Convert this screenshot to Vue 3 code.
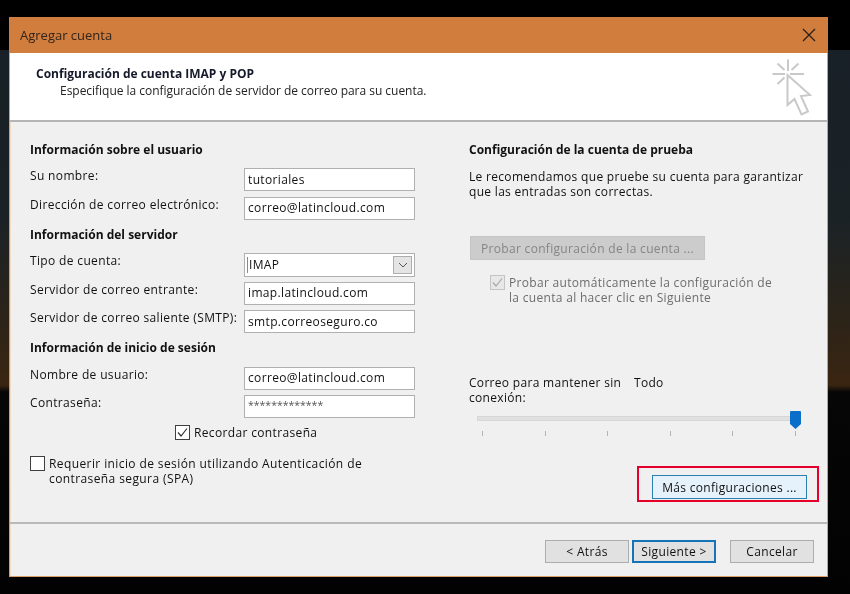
<script setup>
const userRows = [
  { label: 'Su nombre:', value: 'tutoriales' },
  { label: 'Dirección de correo electrónico:', value: 'correo@latincloud.com' },
]
const serverRows = [
  { label: 'Servidor de correo entrante:', value: 'imap.latincloud.com' },
  { label: 'Servidor de correo saliente (SMTP):', value: 'smtp.correoseguro.co' },
]
const loginRows = [
  { label: 'Nombre de usuario:', value: 'correo@latincloud.com' },
  { label: 'Contraseña:', value: '*************', pass: true },
]
const ticks = [0, 1, 2, 3, 4, 5]
</script>

<template>
  <div class="page">
    <div class="window">
      <div class="titlebar">
        <span class="title">Agregar cuenta</span>
        <svg class="close" width="14" height="14" viewBox="0 0 14 14">
          <path d="M1 1 L13 13 M13 1 L1 13" stroke="#2a2018" stroke-width="1.3" fill="none" />
        </svg>
      </div>

      <header class="head">
        <div class="head-text">
          <div class="head-title">Configuración de cuenta IMAP y POP</div>
          <div class="head-sub">Especifique la configuración de servidor de correo para su cuenta.</div>
        </div>
        <svg class="wizard" width="40" height="58" viewBox="772 58 40 58">
          <g stroke="#c9c9c9" stroke-width="2" fill="none">
            <path d="M788 59.5 V71 M772.5 74 H785 M790 74 H804 M777.5 63.5 L784.5 70 M798.5 63.5 L791.5 70 M777.5 84 L784.5 77.5" />
            <path d="M787.5 75 V105 L794.5 99 L801.5 114.5 L808 111.5 L801 96 L810 95 Z" fill="#fff" stroke-linejoin="miter" />
          </g>
        </svg>
      </header>

      <main class="body">
        <section class="left">
          <h3 class="section first">Información sobre el usuario</h3>
          <div v-for="r in userRows" :key="r.label" class="row">
            <label>{{ r.label }}</label>
            <div class="input">{{ r.value }}</div>
          </div>

          <h3 class="section">Información del servidor</h3>
          <div class="row">
            <label>Tipo de cuenta:</label>
            <div class="input select">
              <span class="caret-line"></span>
              <span>IMAP</span>
              <span class="arrow">
                <svg width="10" height="6" viewBox="0 0 10 6"><path d="M1 1 L5 5 L9 1" stroke="#555" stroke-width="1" fill="none" /></svg>
              </span>
            </div>
          </div>
          <div v-for="r in serverRows" :key="r.label" class="row">
            <label>{{ r.label }}</label>
            <div class="input">{{ r.value }}</div>
          </div>

          <h3 class="section">Información de inicio de sesión</h3>
          <div v-for="r in loginRows" :key="r.label" class="row">
            <label>{{ r.label }}</label>
            <div class="input" :class="{ pass: r.pass }">{{ r.value }}</div>
          </div>

          <div class="remember">
            <span class="check">
              <svg width="13" height="13" viewBox="0 0 13 13"><path d="M2 6.5 L5 10 L11 2.5" stroke="#333" stroke-width="1.2" fill="none" /></svg>
            </span>
            <span>Recordar contraseña</span>
          </div>

          <div class="spa">
            <span class="check"></span>
            <span>Requerir inicio de sesión utilizando Autenticación de<br />contraseña segura (SPA)</span>
          </div>
        </section>

        <section class="right">
          <h3 class="section first">Configuración de la cuenta de prueba</h3>
          <p class="intro">Le recomendamos que pruebe su cuenta para garantizar<br />que las entradas son correctas.</p>
          <div class="test-btn">Probar configuración de la cuenta ...</div>
          <div class="auto">
            <span class="check off">
              <svg width="13" height="13" viewBox="0 0 13 13"><path d="M2 6.5 L5 10 L11 2.5" stroke="#a8a8a8" stroke-width="1.2" fill="none" /></svg>
            </span>
            <span>Probar automáticamente la configuración de<br />la cuenta al hacer clic en Siguiente</span>
          </div>

          <div class="offline">
            <span class="offline-label">Correo para mantener sin conexión:</span>
            <span>Todo</span>
          </div>
          <div class="slider">
            <div class="track"></div>
            <svg class="thumb" width="11" height="18" viewBox="0 0 11 18"><path d="M1 0 H10 Q11 0 11 1 V13 L5.5 18 L0 13 V1 Q0 0 1 0 Z" fill="#0a6fc9" /></svg>
            <div class="ticks">
              <span v-for="t in ticks" :key="t" class="tick"></span>
            </div>
          </div>

          <div class="more-wrap">
            <div class="more-btn">Más configuraciones ...</div>
            <div class="highlight"></div>
          </div>
        </section>
      </main>

      <footer class="foot">
        <div class="btn">&lt; Atrás</div>
        <div class="btn primary">Siguiente &gt;</div>
        <div class="btn cancel">Cancelar</div>
      </footer>
    </div>
  </div>
</template>

<style>
html, body { margin: 0; background: #000; }
</style>

<style scoped>
.page {
  width: 850px;
  height: 594px;
  box-sizing: border-box;
  padding: 17px 22px 17px 9px;
  background:
    linear-gradient(to bottom, #000 0, #000 50px, #182127 50px, #1b2226 220px, #2c2418 320px, #3a2511 385px, #060606 392px, #020202 594px);
  font-family: "Open Sans", "Noto Sans", sans-serif;
  font-size: 12px;
  letter-spacing: 0.35px;
  color: #111;
  overflow: hidden;
  filter: blur(0.3px);
}
.window {
  height: 560px;
  display: flex;
  flex-direction: column;
  background: #f0f0f0;
  border: 1px solid #d99f68;
  border-top: none;
  box-sizing: border-box;
  box-shadow: inset 1px 0 0 #f3dcc3;
}
.titlebar {
  height: 36px;
  margin: 0 -1px;
  flex: none;
  background: #d07d3e;
  display: flex;
  align-items: center;
  justify-content: space-between;
  padding: 0 12px 0 11px;
  font-size: 13px;
  letter-spacing: 0;
  color: #33241a;
}
.head {
  height: 67px;
  flex: none;
  background: #fff;
  display: flex;
  justify-content: space-between;
  border-bottom: 2px solid #b5b5b5;
  padding: 0 15px 0 26px;
  letter-spacing: 0;
}
.head-text { padding-top: 12px; line-height: 17px; }
.head-title { font-weight: 700; color: #15192a; }
.head-sub { padding-left: 24px; color: #222; letter-spacing: -0.03px; }
.wizard { margin-top: 5px; }
.body {
  flex: 1;
  display: flex;
  padding: 0 0 0 20px;
  position: relative;
  border-bottom: 2px solid #b9b9b9;
}
.left { width: 385px; }
.right { width: 340px; margin-left: 54px; letter-spacing: 0.31px; }
.section {
  margin: -1px 0 9px;
  padding-top: 0.5px;
  font-size: 12px;
  line-height: 20px;
  height: 20px;
  box-sizing: border-box;
  font-weight: 700;
  letter-spacing: 0;
  color: #111;
}
.section.first { margin: 18px 0 8px; padding-top: 0; }
.row {
  display: flex;
  justify-content: space-between;
  height: 23px;
  margin-bottom: 5.5px;
}
.row label { line-height: 15px; padding-top: 0.4px; }
.input {
  width: 171px;
  height: 23px;
  box-sizing: border-box;
  border: 1px solid #b0b0b0;
  background: #fff;
  padding: 0 0 0 3px;
  line-height: 20px;
  color: #111;
  display: flex;
  align-items: center;
}
.input.pass {
  align-items: flex-start;
  font-size: 10.5px;
  letter-spacing: 0;
  line-height: 19px;
  color: #555;
}
.select { height: 24px; position: relative; gap: 1px; padding-left: 2px; padding-bottom: 1px; }
.caret-line { width: 1px; height: 16px; background: #6a8fb5; }
.arrow {
  position: absolute;
  right: 2px;
  top: 2px;
  width: 19px;
  height: 18px;
  background: #e4e4e4;
  border: 1px solid #adadad;
  box-sizing: border-box;
  display: flex;
  align-items: center;
  justify-content: center;
}
.check {
  width: 15px;
  height: 15px;
  box-sizing: border-box;
  border: 1px solid #3f3f3f;
  background: #fff;
  flex: none;
  display: flex;
  align-items: center;
  justify-content: center;
}
.check.off { border-color: #c4c4c4; background: #e8e8e8; }
.remember {
  display: flex;
  align-items: center;
  gap: 4px;
  margin: 7px 0 0 145px;
  height: 15px;
}
.spa {
  display: flex;
  gap: 4px;
  margin-top: 16px;
  line-height: 15px;
  letter-spacing: 0.4px;
}
.intro { margin: 9px 0 0; line-height: 15px; }
.test-btn {
  width: 235px;
  height: 24px;
  margin: 37px 0 0 1px;
  box-sizing: border-box;
  background: #cccccc;
  border: 1px solid #c4c4c4;
  color: #858585;
  line-height: 24px;
  text-align: center;
}
.auto {
  display: flex;
  gap: 4px;
  margin: 15px 0 0 21px;
  line-height: 15px;
  color: #6d6d6d;
}
.offline {
  display: flex;
  margin-top: 70px;
  line-height: 15px;
}
.offline-label { width: 165px; }
.slider { position: relative; height: 50px; margin-top: 6px; width: 340px; }
.track {
  position: absolute;
  left: 8px;
  top: 5px;
  width: 318px;
  height: 5px;
  background: #e0e0e0;
  border: 1px solid #d6d6d6;
  box-sizing: border-box;
}
.thumb { position: absolute; left: 321px; top: 0; }
.ticks {
  position: absolute;
  left: 13px;
  top: 20px;
  width: 314px;
  display: flex;
  justify-content: space-between;
}
.tick { width: 1px; height: 5px; background: #b4b4b4; }
.more-wrap {
  position: relative;
  width: 155px;
  height: 24px;
  margin: 14px 0 0 183px;
}
.more-btn {
  height: 24px;
  box-sizing: border-box;
  border: 1px solid #2c7fb3;
  background: #e5f1fb;
  line-height: 24px;
  text-align: center;
  color: #111;
}
.highlight {
  position: absolute;
  left: -15px;
  top: -9px;
  width: 182px;
  height: 36px;
  box-sizing: border-box;
  border: 2px solid #e4002b;
}
.foot {
  height: 52px;
  flex: none;
  display: flex;
  align-items: flex-start;
  padding: 16px 13px 0 0;
  justify-content: flex-end;
  box-sizing: border-box;
}
.btn {
  width: 84px;
  height: 23px;
  box-sizing: border-box;
  border: 1px solid #adadad;
  background: #e1e1e1;
  line-height: 21px;
  text-align: center;
  margin-left: 3px;
}
.btn.primary { border: 2px solid #1573b8; line-height: 19px; }
.btn.cancel { margin-left: 14px; }
</style>
